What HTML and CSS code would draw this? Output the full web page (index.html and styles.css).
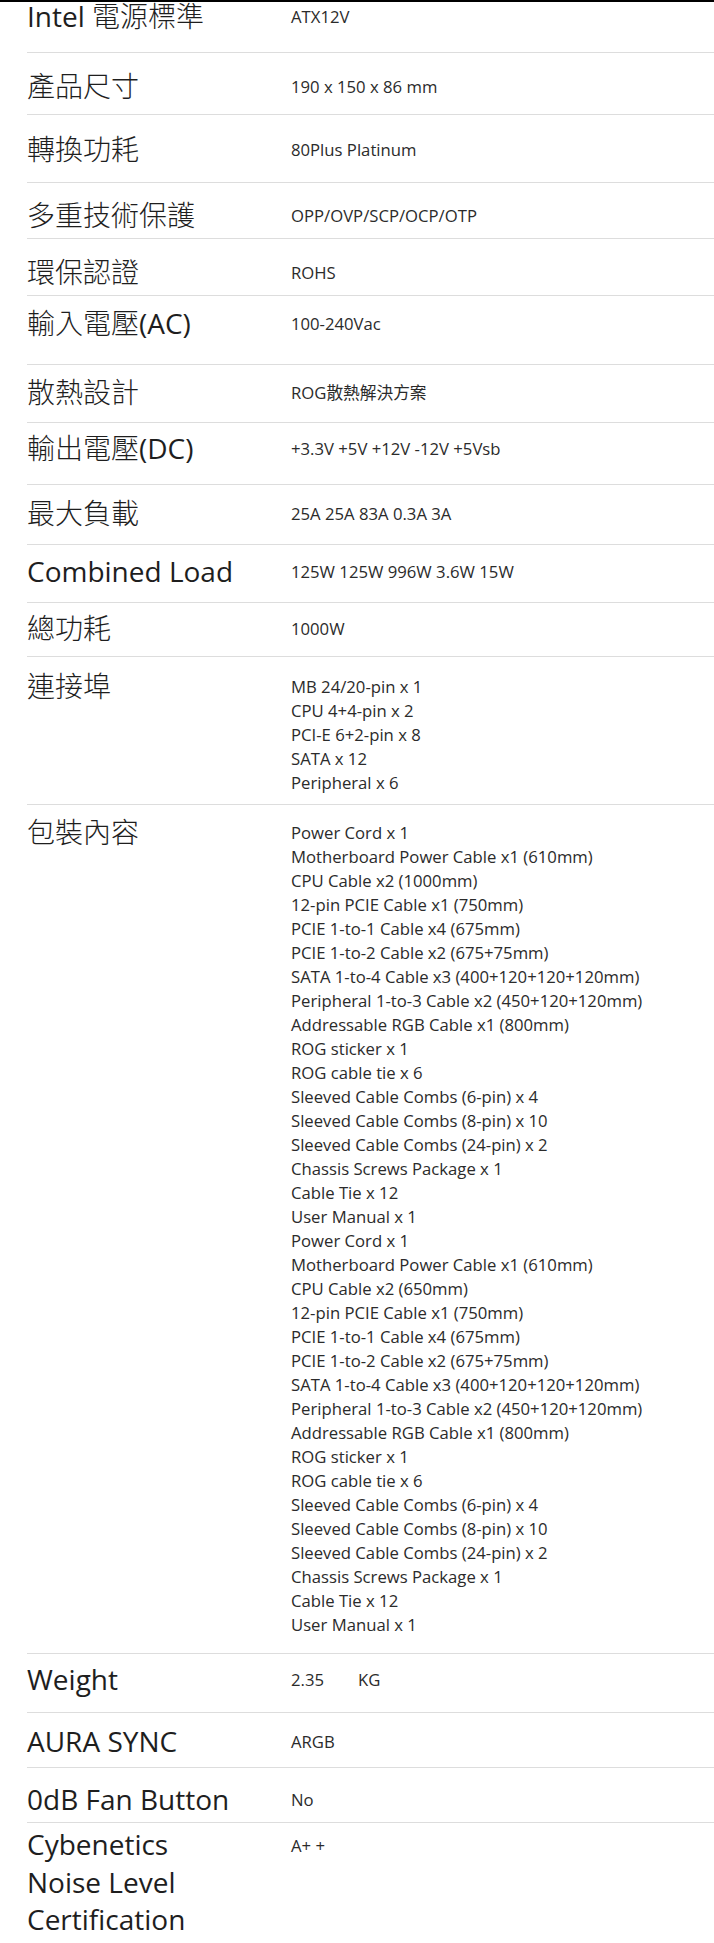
FILE: index.html
```html
<!DOCTYPE html>
<html lang="zh-Hant">
<head>
<meta charset="utf-8">
<title>規格</title>
<link rel="stylesheet" href="styles.css">
</head>
<body>
<div class="topbar"></div>
<div class="spec">
  <div class="row"><div class="label">Intel <span class="cjk">電源標準</span></div><div class="value">ATX12V</div></div>
  <div class="row"><div class="label"><span class="cjk">產品尺寸</span></div><div class="value">190 x 150 x 86 mm</div></div>
  <div class="row"><div class="label"><span class="cjk">轉換功耗</span></div><div class="value">80Plus Platinum</div></div>
  <div class="row"><div class="label"><span class="cjk">多重技術保護</span></div><div class="value">OPP/OVP/SCP/OCP/OTP</div></div>
  <div class="row"><div class="label"><span class="cjk">環保認證</span></div><div class="value">ROHS</div></div>
  <div class="row"><div class="label"><span class="cjk">輸入電壓</span>(AC)</div><div class="value">100-240Vac</div></div>
  <div class="row"><div class="label"><span class="cjk">散熱設計</span></div><div class="value">ROG散熱解決方案</div></div>
  <div class="row"><div class="label"><span class="cjk">輸出電壓</span>(DC)</div><div class="value">+3.3V +5V +12V -12V +5Vsb</div></div>
  <div class="row"><div class="label"><span class="cjk">最大負載</span></div><div class="value">25A 25A 83A 0.3A 3A</div></div>
  <div class="row"><div class="label">Combined Load</div><div class="value">125W 125W 996W 3.6W 15W</div></div>
  <div class="row"><div class="label"><span class="cjk">總功耗</span></div><div class="value">1000W</div></div>
  <div class="row">
    <div class="label"><span class="cjk">連接埠</span></div>
    <ul class="value items">
      <li>MB 24/20-pin x 1</li>
      <li>CPU 4+4-pin x 2</li>
      <li>PCI-E 6+2-pin x 8</li>
      <li>SATA x 12</li>
      <li>Peripheral x 6</li>
    </ul>
  </div>
  <div class="row">
    <div class="label"><span class="cjk">包裝內容</span></div>
    <ul class="value items">
      <li>Power Cord x 1</li>
      <li>Motherboard Power Cable x1 (610mm)</li>
      <li>CPU Cable x2 (1000mm)</li>
      <li>12-pin PCIE Cable x1 (750mm)</li>
      <li>PCIE 1-to-1 Cable x4 (675mm)</li>
      <li>PCIE 1-to-2 Cable x2 (675+75mm)</li>
      <li>SATA 1-to-4 Cable x3 (400+120+120+120mm)</li>
      <li>Peripheral 1-to-3 Cable x2 (450+120+120mm)</li>
      <li>Addressable RGB Cable x1 (800mm)</li>
      <li>ROG sticker x 1</li>
      <li>ROG cable tie x 6</li>
      <li>Sleeved Cable Combs (6-pin) x 4</li>
      <li>Sleeved Cable Combs (8-pin) x 10</li>
      <li>Sleeved Cable Combs (24-pin) x 2</li>
      <li>Chassis Screws Package x 1</li>
      <li>Cable Tie x 12</li>
      <li>User Manual x 1</li>
      <li>Power Cord x 1</li>
      <li>Motherboard Power Cable x1 (610mm)</li>
      <li>CPU Cable x2 (650mm)</li>
      <li>12-pin PCIE Cable x1 (750mm)</li>
      <li>PCIE 1-to-1 Cable x4 (675mm)</li>
      <li>PCIE 1-to-2 Cable x2 (675+75mm)</li>
      <li>SATA 1-to-4 Cable x3 (400+120+120+120mm)</li>
      <li>Peripheral 1-to-3 Cable x2 (450+120+120mm)</li>
      <li>Addressable RGB Cable x1 (800mm)</li>
      <li>ROG sticker x 1</li>
      <li>ROG cable tie x 6</li>
      <li>Sleeved Cable Combs (6-pin) x 4</li>
      <li>Sleeved Cable Combs (8-pin) x 10</li>
      <li>Sleeved Cable Combs (24-pin) x 2</li>
      <li>Chassis Screws Package x 1</li>
      <li>Cable Tie x 12</li>
      <li>User Manual x 1</li>
    </ul>
  </div>
  <div class="row"><div class="label">Weight</div><div class="value">2.35<span class="unit">KG</span></div></div>
  <div class="row"><div class="label">AURA SYNC</div><div class="value">ARGB</div></div>
  <div class="row"><div class="label">0dB Fan Button</div><div class="value">No</div></div>
  <div class="row last"><div class="label">Cybenetics<br>Noise Level<br>Certification</div><div class="value">A+ +</div></div>
</div>
</body>
</html>
```

FILE: styles.css
```css
html, body {
  margin: 0;
  padding: 0;
  background: #ffffff;
}

body {
  font-family: "Open Sans", "Noto Sans CJK TC", sans-serif;
  color: #222222;
  overflow: hidden;
}

.topbar {
  position: fixed;
  top: 0;
  left: 0;
  right: 0;
  height: 2px;
  background: #000000;
  z-index: 5;
}

.spec {
  margin-top: -6px;
}

.row {
  display: grid;
  grid-template-columns: 264px 1fr;
  align-items: start;
  margin-left: 27px;
  border-bottom: 1px solid #dddddd;
}

.row.last {
  border-bottom: none;
}

.label {
  font-size: 28px;
  line-height: 38px;
  color: #1e1e1e;
  font-weight: 400;
}

.cjk {
  font-family: "Noto Sans CJK TC", sans-serif;
  font-weight: 300;
  line-height: 1;
}

.row.last .label {
  line-height: 37.5px;
}

.value {
  margin-top: 8px;
  font-size: 16.7px;
  line-height: 24px;
  color: #2b2b2b;
}

.items {
  list-style: none;
  padding: 0;
  margin-bottom: 0;
}

.unit {
  margin-left: 34px;
}

.row:nth-child(1)  { padding: 3px 0 17px; }
.row:nth-child(2)  { padding: 14px 0 9px; }
.row:nth-child(3)  { padding: 15px 0 14px; }
.row:nth-child(4)  { padding: 13px 0 4px; }
.row:nth-child(5)  { padding: 14px 0 4px; }
.row:nth-child(6)  { padding: 8px 0 22px; }
.row:nth-child(7)  { padding: 8px 0 11px; }
.row:nth-child(8)  { padding: 6px 0 17px; }
.row:nth-child(9)  { padding: 9px 0 12px; }
.row:nth-child(10) { padding: 7px 0 12px; }
.row:nth-child(11) { padding: 6px 0 9px; }
.row:nth-child(12) { padding: 10px 0 9px; }
.row:nth-child(13) { padding: 8px 0 16px; }
.row:nth-child(14) { padding: 6px 0 14px; }
.row:nth-child(15) { padding: 9px 0 7px; }
.row:nth-child(16) { padding: 12px 0 4px; }
.row:nth-child(17) { padding: 3px 0 0; }
```
